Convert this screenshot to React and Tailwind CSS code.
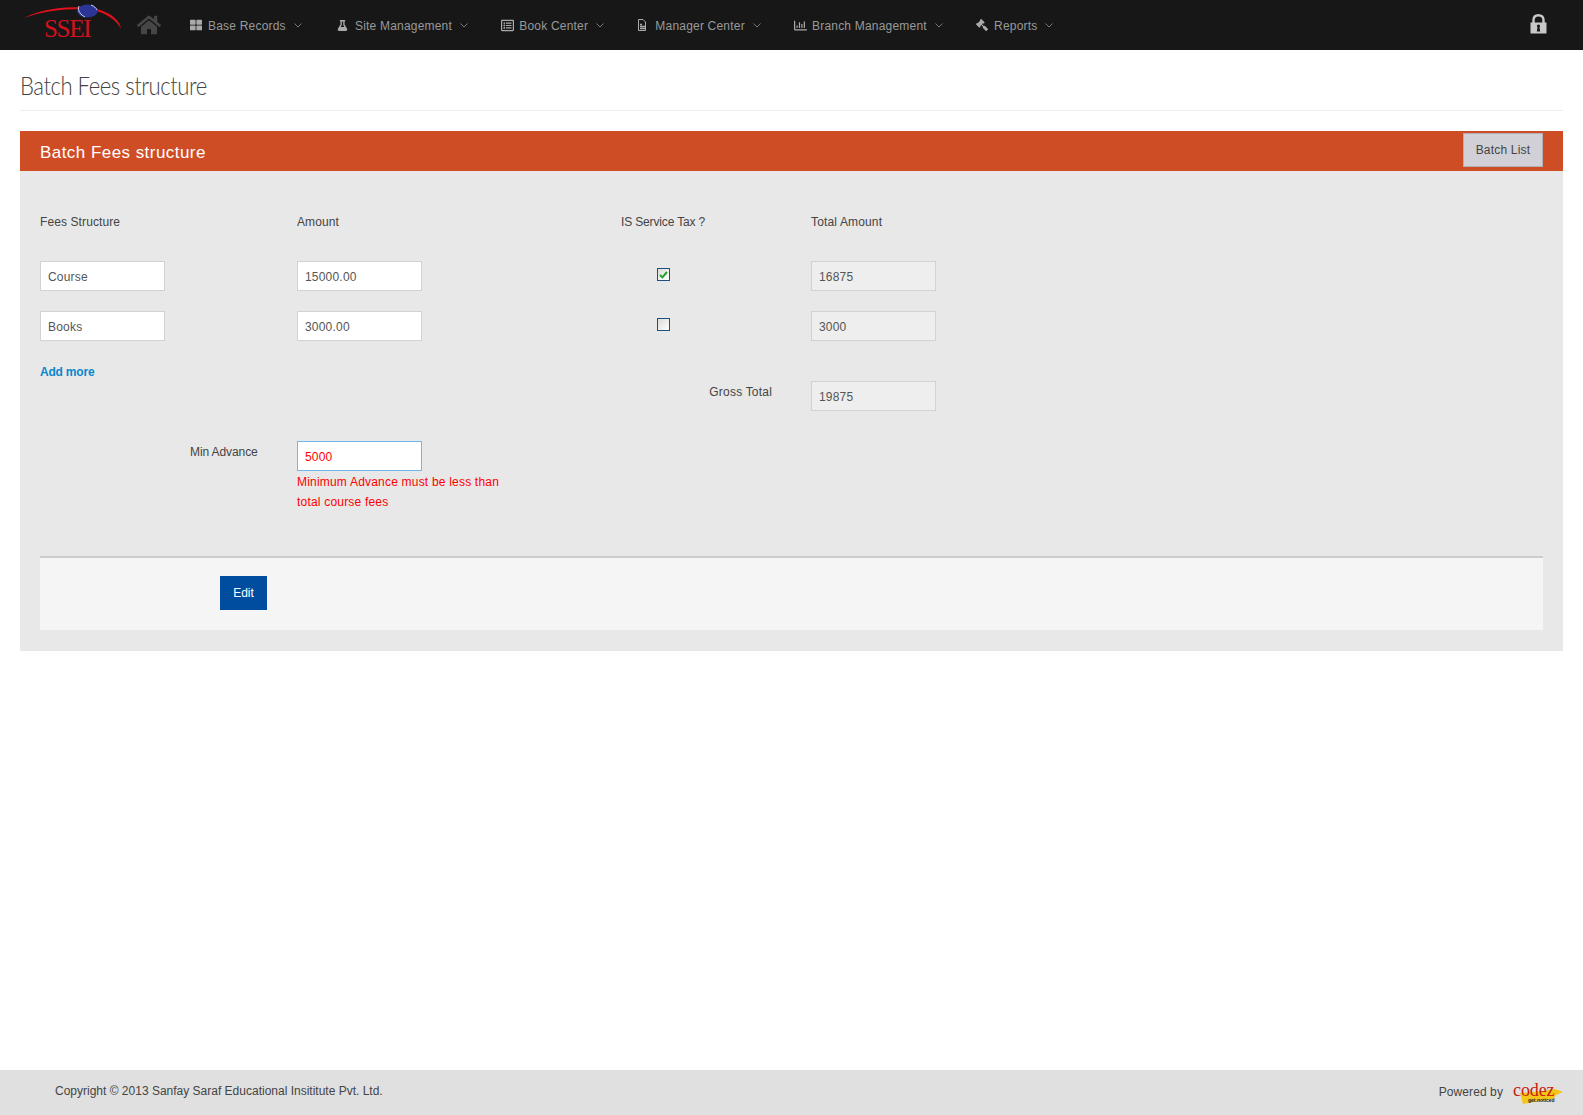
import React from "react";
import { FaHome, FaThLarge, FaFlask, FaRegListAlt, FaRegChartBar, FaGavel } from "react-icons/fa";

const Chevron = () => (
  <svg width="8" height="5" viewBox="0 0 8 5" className="ml-[8px] mt-[1px]" fill="none" stroke="#777" strokeWidth="1">
    <path d="M0.5 0.5 L4 4 L7.5 0.5" />
  </svg>
);

const FileIcon = () => (
  <svg width="10" height="12" viewBox="0 0 10 12" fill="none" stroke="#aaa" strokeWidth="1">
    <path d="M1.5 0.5 H6 L8.5 3 V11.5 H1.5 Z" />
    <path d="M3 5.5 H5 M3 7.5 H8 M3 9.5 H8" strokeWidth="1.4" />
  </svg>
);

const navItems = [
  { label: "Base Records", icon: <FaThLarge size={12} color="#aaa" />, extra: "mr-[2px]" },
  { label: "Site Management", icon: <FaFlask size={11} color="#aaa" />, extra: "" },
  { label: "Book Center", icon: <FaRegListAlt size={13} color="#aaa" />, extra: "" },
  { label: "Manager Center", icon: <FileIcon />, extra: "" },
  { label: "Branch Management", icon: <FaRegChartBar size={13} color="#aaa" />, extra: "" },
  { label: "Reports", icon: <FaGavel size={12} color="#aaa" className="-scale-x-100" />, extra: "" },
];

const inputBase =
  "block w-[125px] h-[30px] border border-[#d2d2d2] px-[7px] pt-[2px] text-[12px] tracking-[0.2px] outline-none";

function Field({ value, muted }) {
  return (
    <input
      readOnly
      value={value}
      className={`${inputBase} ${muted ? "bg-[#eeeeee] text-[#555]" : "bg-white text-[#555]"}`}
    />
  );
}

function Checkbox({ checked }) {
  return (
    <span className="mt-[7px] ml-[36px] flex h-[13px] w-[13px] items-center justify-center border border-[#1d5180] bg-gradient-to-br from-[#dcdcd8] to-white">
      {checked && (
        <svg width="9" height="8" viewBox="0 0 9 8" fill="none" stroke="#25a02c" strokeWidth="2">
          <path d="M1 4 L3.4 6.4 L8 1" />
        </svg>
      )}
    </span>
  );
}

const Label = ({ children, className = "" }) => (
  <div className={`h-[20px] text-[12px] leading-[20px] text-[#444] ${className}`}>{children}</div>
);

const gridCols = "grid grid-cols-[257px_324px_190px_1fr]";

export default function App() {
  return (
    <div className="flex min-h-[1115px] flex-col bg-white font-['Liberation_Sans',Arial,sans-serif]">
      <header className="relative flex h-[50px] shrink-0 items-center bg-[#171717]">
        <div className="relative h-[50px] w-[137px] shrink-0">
          <svg width="137" height="50" viewBox="0 0 137 50" className="absolute left-0 top-0">
            <path d="M24 18 C38 10 60 7 82 7 L82 9 C60 9 40 12 24 18 Z" fill="#e0101c" />
            <path d="M96 9 C110 12 120 20 121 29 C117 21 108 14 96 11 Z" fill="#e0101c" />
            <ellipse cx="87.5" cy="11" rx="10.5" ry="6.5" fill="#2b3596" />
            <path d="M79 6 C77 11 81 15 85 17" fill="none" stroke="#c9d3ee" strokeWidth="1" />
            <path d="M91 5 C94 6 96 8 97 10" fill="none" stroke="#c9d3ee" strokeWidth="1" />
          </svg>
          <span className="absolute left-[44px] top-[15px] font-['Liberation_Serif',serif] text-[25px] leading-[28px] tracking-[-1.3px] text-[#d3111f]">
            SSEI
          </span>
        </div>
        <FaHome size={24} color="#464646" className="mb-[1px]" />
        <nav className="ml-[29px] flex items-center gap-[33.2px]">
          {navItems.map((item) => (
            <div key={item.label} className={`flex items-center text-[12px] tracking-[0.2px] text-[#999] ${item.extra}`}>
              <span className="flex w-[18px] items-center">{item.icon}</span>
              <span className="pt-[2px]">{item.label}</span>
              <Chevron />
            </div>
          ))}
        </nav>
        <svg width="17" height="20" viewBox="0 0 17 20" className="ml-auto mr-[36px] mb-[2px]">
          <path d="M3.5 9 V6 C3.5 3 5.5 1.2 8.5 1.2 C11.5 1.2 13.5 3 13.5 6 V9" fill="none" stroke="#c8c8c8" strokeWidth="2.4" />
          <rect x="0.5" y="8.5" width="16" height="11" fill="#c8c8c8" />
          <path d="M8.5 10.5 a1.6 1.6 0 0 1 1 2.8 L10.2 17.5 H6.8 L7.5 13.3 a1.6 1.6 0 0 1 1 -2.8 Z" fill="#171717" />
        </svg>
      </header>

      <main className="px-[20px]">
        <div className="h-[61px] border-b border-[#eeeeee] pt-[18px]">
          <h1 className="origin-left scale-x-[0.885] font-['Lato',sans-serif] text-[25px] leading-[34px] font-light tracking-[-0.55px] text-[#444]">
            Batch Fees structure
          </h1>
        </div>

        <section className="mt-[20px]">
          <div className="flex h-[40px] items-center justify-between bg-[#cf4d25] pl-[20px] pr-[20px]">
            <h2 className="pt-[3px] text-[17px] tracking-[0.45px] text-white">Batch Fees structure</h2>
            <button className="mb-[2px] h-[34px] w-[80px] border border-[#b0b0b6] bg-[#d0d0d6] text-[12px] tracking-[0.2px] text-[#444]">
              Batch List
            </button>
          </div>

          <div className="bg-[#e8e8e8] px-[20px] pt-[41px] pb-[21px]">
            <div className={gridCols}>
              <Label className="tracking-[0.1px]">Fees Structure</Label>
              <Label className="tracking-[0.1px]">Amount</Label>
              <Label className="tracking-[-0.15px]">IS Service Tax ?</Label>
              <Label className="tracking-[0.15px]">Total Amount</Label>
            </div>

            <div className={`${gridCols} mt-[29px]`}>
              <Field value="Course" />
              <Field value="15000.00" />
              <Checkbox checked />
              <Field value="16875" muted />
            </div>

            <div className={`${gridCols} mt-[20px]`}>
              <Field value="Books" />
              <Field value="3000.00" />
              <Checkbox />
              <Field value="3000" muted />
            </div>

            <div className={`${gridCols} mt-[21px]`}>
              <a href="#" className="h-[20px] text-[12px] leading-[20px] font-bold tracking-[-0.2px] text-[#0b87cc]">
                Add more
              </a>
              <div />
              <Label className="mt-[20px] pr-[39px] text-right tracking-[0.2px]">Gross Total</Label>
              <div className="mt-[19px]">
                <Field value="19875" muted />
              </div>
            </div>

            <div className={`${gridCols} mt-[30px]`}>
              <Label className="mt-[1px] pl-[150px] tracking-[-0.1px]">Min Advance</Label>
              <div className="col-span-2">
                <input
                  readOnly
                  value="5000"
                  className="block h-[30px] w-[125px] border border-[#74b6ec] bg-white px-[7px] pt-[2px] text-[12px] tracking-[0.2px] text-[#f00] outline-none"
                />
                <p className="mt-[1px] w-[215px] text-[12px] leading-[20px] tracking-[0.2px] text-[#f00]">
                  Minimum Advance must be less than total course fees
                </p>
              </div>
            </div>

            <div className="mt-[44px] border-t-2 border-[#cccccc] bg-[#f5f5f5] pt-[18px] pb-[20px] pl-[180px]">
              <button className="h-[34px] w-[47px] bg-[#004da0] text-[12px] text-white">Edit</button>
            </div>
          </div>
        </section>
      </main>

      <footer className="mt-auto flex h-[45px] shrink-0 items-center justify-between bg-[#e0e0e0] pl-[55px] pr-[20px] text-[12px] text-[#444]">
        <span className="mb-[4px]">Copyright © 2013 Sanfay Saraf Educational Insititute Pvt. Ltd.</span>
        <div className="flex items-center gap-[10px]">
          <span className="mb-[2px] tracking-[0.1px]">Powered by</span>
          <div className="relative h-[24px] w-[50px]">
            <svg width="50" height="24" viewBox="0 0 50 24" className="absolute left-0 top-0">
              <path d="M7 12 L30 10 L42 8 L50 11 L43 14 L40 18 L10 23 Z" fill="#f5c518" />
            </svg>
            <span className="absolute left-0 top-[-2px] font-['Liberation_Serif',serif] text-[18px] leading-[22px] tracking-[-0.1px] text-[#c5200f]">
              codez
            </span>
            <span className="absolute left-[15px] top-[16px] text-[5px] leading-[6px] font-bold tracking-normal text-[#222]">
              get.noticed
            </span>
          </div>
        </div>
      </footer>
    </div>
  );
}
